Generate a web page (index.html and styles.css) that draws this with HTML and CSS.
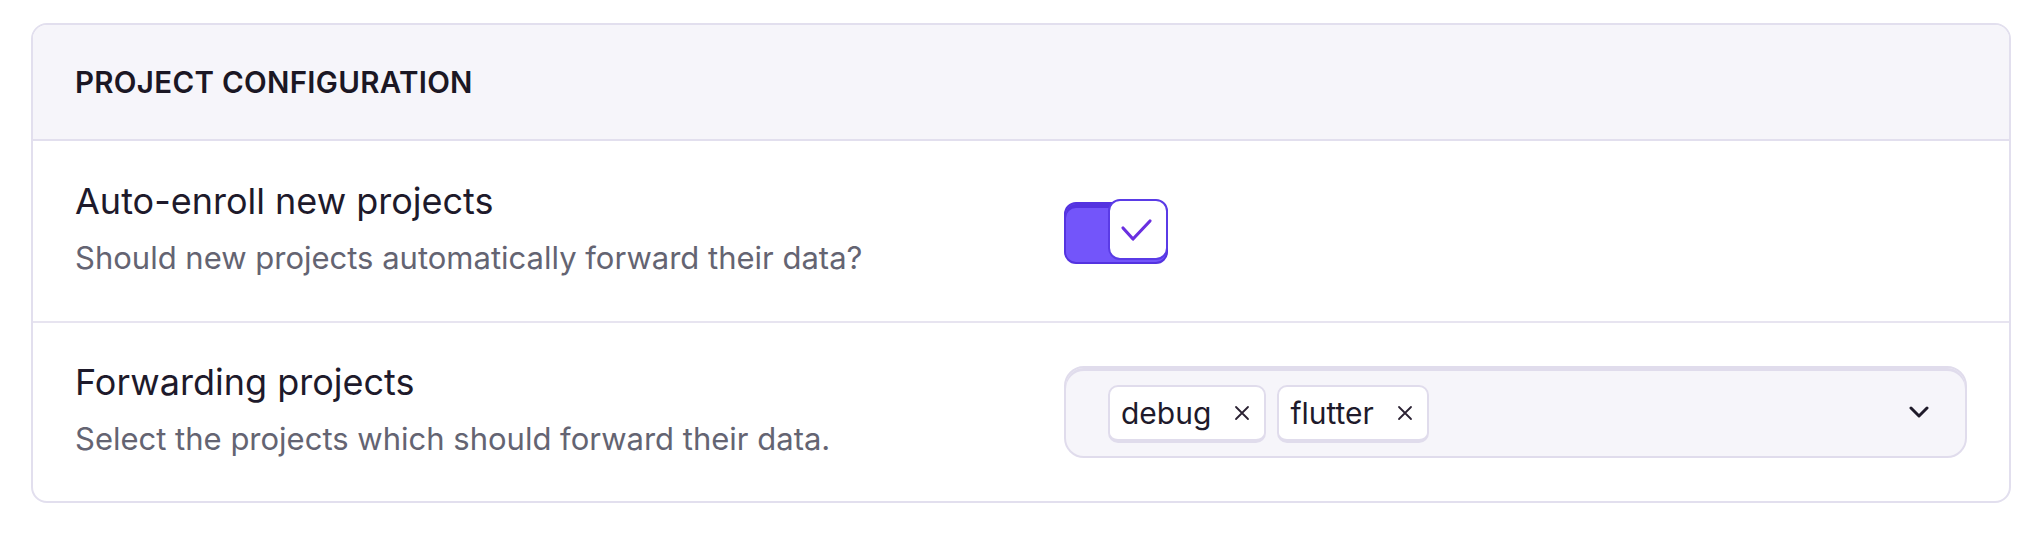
FILE: index.html
```html
<!DOCTYPE html>
<html lang="en">
<head>
<meta charset="utf-8">
<title>Project Configuration</title>
<link rel="stylesheet" href="styles.css">
</head>
<body>
<div class="page">
  <section class="panel">
    <header class="panel-header">PROJECT CONFIGURATION</header>
    <div class="row">
      <div class="label">
        <div class="title">Auto-enroll new projects</div>
        <div class="desc">Should new projects automatically forward their data?</div>
      </div>
      <div class="control">
        <div class="switch">
          <div class="track"></div>
          <div class="knob">
            <svg width="56" height="57" viewBox="0 0 56 57"><polyline points="13,27 23,38 40,20" fill="none" stroke="#6a2fe0" stroke-width="3.2" stroke-linecap="round" stroke-linejoin="round"/></svg>
          </div>
        </div>
      </div>
    </div>
    <div class="row">
      <div class="label">
        <div class="title">Forwarding projects</div>
        <div class="desc">Select the projects which should forward their data.</div>
      </div>
      <div class="control">
        <div class="select">
          <div class="chips">
            <span class="chip"><span class="chip-text">debug</span><svg class="chip-x" width="16" height="16" viewBox="0 0 16 16"><path d="M2 2L14 14M14 2L2 14" stroke="#2b2233" stroke-width="1.8" stroke-linecap="round"/></svg></span>
            <span class="chip"><span class="chip-text">flutter</span><svg class="chip-x" width="16" height="16" viewBox="0 0 16 16"><path d="M2 2L14 14M14 2L2 14" stroke="#2b2233" stroke-width="1.8" stroke-linecap="round"/></svg></span>
          </div>
          <svg class="chevron" width="20" height="12" viewBox="0 0 20 12"><polyline points="2,2 10,10 18,2" fill="none" stroke="#1f1a2a" stroke-width="3" stroke-linecap="round" stroke-linejoin="round"/></svg>
        </div>
      </div>
    </div>
  </section>
</div>
</body>
</html>
```

FILE: styles.css
```css
* { box-sizing: border-box; }
html, body { margin: 0; padding: 0; background: #ffffff; }
body { font-family: Inter, "Noto Sans", sans-serif; color: #1e1a2b; }

.page { padding: 23px 33px 0 31px; }

.panel {
  border: 2px solid #e2dfee;
  border-radius: 16px;
  overflow: hidden;
  background: #fff;
}

.panel-header {
  height: 116px;
  display: flex;
  align-items: center;
  padding-left: 42px;
  background: #f6f5fa;
  border-bottom: 2px solid #e2dfee;
  font-size: 29.5px;
  font-weight: 600;
  letter-spacing: 0.3px;
  color: #1b1724;
}

.row {
  display: grid;
  grid-template-columns: 1fr 1fr;
  column-gap: 86px;
  align-items: center;
  min-height: 180px;
  padding: 0 42px 0 42px;
}
.row + .row { border-top: 2px solid #e7e4f0; }

.label { padding-bottom: 5px; }
.title { font-size: 36px; line-height: 44px; color: #1e1a2b; }
.desc { font-size: 31px; line-height: 40px; color: #646472; margin-top: 15px; }

.control { display: flex; align-items: center; }

.switch { position: relative; width: 104px; height: 65px; }
.track {
  position: absolute; left: 0; top: 3px;
  width: 104px; height: 62px;
  background: #7355fa;
  border: 2px solid #5433e0;
  border-radius: 12px;
  box-shadow: inset 0 4px 0 #5433e0;
}
.knob {
  position: absolute; right: 0; top: 0;
  width: 60px; height: 61px;
  background: #fff;
  border: 2px solid #5a3be6;
  border-radius: 12px;
  display: flex; align-items: center; justify-content: center;
}

.select {
  width: 100%;
  height: 92px;
  display: flex;
  align-items: center;
  justify-content: space-between;
  padding: 0 36px 0 42px;
  background: #f6f5fa;
  border: 2px solid #e0dcec;
  border-radius: 20px;
  box-shadow: inset 0 3px 0 #e0dcec;
}
.chips { display: flex; gap: 11px; padding-top: 3px; }
.chip {
  display: flex; align-items: center;
  height: 58px;
  padding: 0 14px 0 11px;
  background: #fff;
  border: 2px solid #e0dcec;
  border-bottom-width: 4px;
  border-radius: 10px;
  font-size: 30px;
  color: #1e1a2b;
}
.chip-text { line-height: 36px; }
.chip-x { margin-left: 23px; }
.chevron { display: block; }
```
